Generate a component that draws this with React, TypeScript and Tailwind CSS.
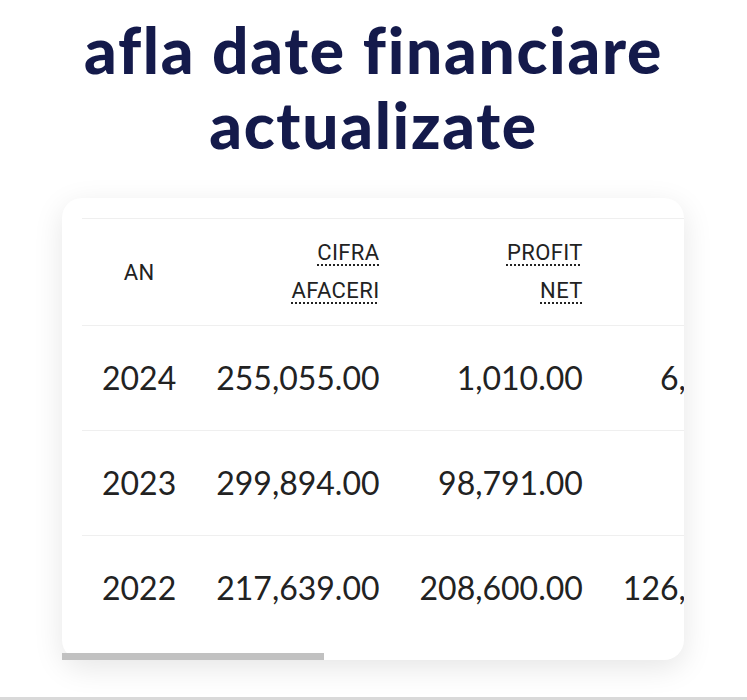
import React from "react";

type Row = { an: string; ca: string; pn: string; c4: string; c5: string; c6: string; c7: string };

const rows: Row[] = [
  { an: "2024", ca: "255,055.00", pn: "1,010.00", c4: "6,412.00", c5: "0.00", c6: "3", c7: "12,540.00" },
  { an: "2023", ca: "299,894.00", pn: "98,791.00", c4: "0.00", c5: "0.00", c6: "3", c7: "11,230.00" },
  { an: "2022", ca: "217,639.00", pn: "208,600.00", c4: "126,503.00", c5: "0.00", c6: "2", c7: "9,870.00" },
];

function Head({ lines }: { lines: string[] }) {
  return (
    <div className="flex flex-col items-end">
      {lines.map((l) => (
        <abbr key={l} className="no-underline leading-[38px]">
          <span className="underline decoration-dotted decoration-2 underline-offset-[4px]">{l}</span>
        </abbr>
      ))}
    </div>
  );
}

export default function App() {
  return (
    <div className="flex min-h-[700px] flex-col bg-white">
      <h1 className="pt-[12px] text-center font-['Lato',sans-serif] text-[64px] font-black leading-[75px] tracking-[1.7px] text-[#141a4b]">
        afla date financiare
        <br />
        actualizate
      </h1>
      <div className="mx-[62px] mt-[36px] w-[622px] rounded-[20px] bg-white shadow-[0_8px_30px_rgba(0,0,0,0.10)]">
        <div className="overflow-hidden rounded-t-[20px] pb-3 pl-5 pt-5">
          <table className="border-collapse whitespace-nowrap text-[#222]">
            <thead>
              <tr className="h-[107px] border-y border-[#efefef] font-['Roboto',sans-serif] text-[22px] font-normal tracking-[0.4px]">
                <th className="px-5 text-center align-middle font-normal">AN</th>
                <th className="px-5 text-right align-middle font-normal">
                  <Head lines={["CIFRA", "AFACERI"]} />
                </th>
                <th className="px-5 text-right align-middle font-normal">
                  <Head lines={["PROFIT", "NET"]} />
                </th>
                <th className="px-5 text-right align-middle font-normal">
                  <Head lines={["CAPITAL", "PROPRIU"]} />
                </th>
                <th className="px-5 text-right align-middle font-normal">
                  <Head lines={["PIERDERE", "NETA"]} />
                </th>
                <th className="px-5 text-right align-middle font-normal">
                  <Head lines={["NR.", "ANGAJATI"]} />
                </th>
                <th className="px-5 text-right align-middle font-normal">
                  <Head lines={["DATORII", "TOTALE"]} />
                </th>
              </tr>
            </thead>
            <tbody className="font-['Lato',sans-serif] text-[32px] font-normal">
              {rows.map((r, i) => (
                <tr
                  key={r.an}
                  className={i < rows.length - 1 ? "h-[105px] border-b border-[#efefef]" : "h-[105px]"}
                >
                  <td className="px-5 text-center align-middle">{r.an}</td>
                  <td className="px-5 text-right align-middle">{r.ca}</td>
                  <td className="px-5 text-right align-middle">{r.pn}</td>
                  <td className="px-5 text-right align-middle">{r.c4}</td>
                  <td className="px-5 text-right align-middle">{r.c5}</td>
                  <td className="px-5 text-right align-middle">{r.c6}</td>
                  <td className="px-5 text-right align-middle">{r.c7}</td>
                </tr>
              ))}
            </tbody>
          </table>
        </div>
        <div className="h-[7px] w-[262px] bg-[#c1c1c1]" />
      </div>
      <div className="mt-auto h-[3px] bg-[#d9d9d9]" />
    </div>
  );
}
